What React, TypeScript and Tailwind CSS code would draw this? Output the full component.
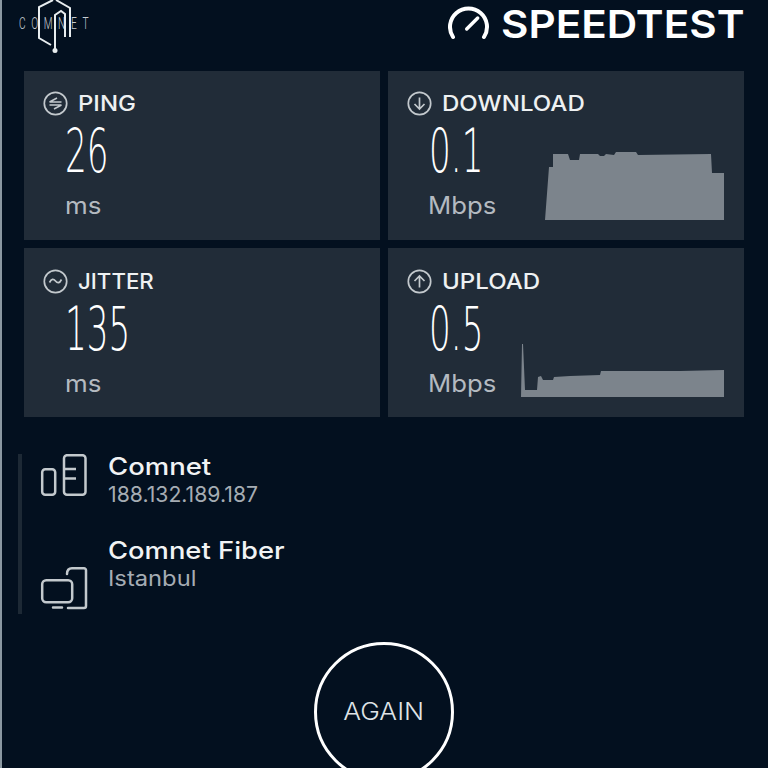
const sans = "font-['Inter','Open_Sans',sans-serif]";

function RoundIcon({ kind }: { kind: 'ping' | 'jitter' | 'down' | 'up' }) {
  return (
    <svg width="25" height="25" viewBox="0 0 25 25" fill="none" stroke="#c3c9cd" strokeWidth="1.7" className="shrink-0">
      <circle cx="12.5" cy="12.5" r="11.2" />
      {kind === 'ping' && <path d="M6.500 11h12M14 7l-7.500 4M6.500 14h12M11 18l7.500-4" strokeWidth="1.500" />}
      {kind === 'jitter' && <path d="M6.500 13.500c2-4 4-4 6-1.500s4 2.500 6-1.500" />}
      {kind === 'down' && <path d="M12.500 6.500v11M7.500 13l5 5 5-5" />}
      {kind === 'up' && <path d="M12.500 18.500v-11M7.500 12l5-5 5 5" />}
    </svg>
  );
}

interface StatProps {
  icon: 'ping' | 'jitter' | 'down' | 'up';
  label: string;
  labelClass: string;
  value: string;
  unit: string;
  unitClass: string;
  topClass: string;
  chart?: string;
}

function Stat({ icon, label, labelClass, value, unit, unitClass, topClass, chart }: StatProps) {
  return (
    <div className={`${topClass} relative h-[169px] bg-[#212c38] pl-[19px]`}>
      <div className="flex h-[25px] items-center gap-[10px]">
        <RoundIcon kind={icon} />
        <span className={`${sans} ${labelClass} origin-left text-[21px] font-medium leading-none text-[#eef1f2]`}>{label}</span>
      </div>
      <div className="ml-[22px] mt-[4px] h-[63px] origin-left scale-x-[0.57] font-['DejaVu_Sans',sans-serif] text-[60px] font-extralight leading-[63px] whitespace-nowrap text-white">
        {value}
      </div>
      <div className={`${sans} ${unitClass} ml-[22px] mt-[8px] origin-left text-[24px] leading-[30px] text-[#b4bac0]`}>{unit}</div>
      {chart && (
        <svg className="absolute left-0 top-0" width="356" height="169" viewBox="0 0 356 169">
          <polygon points={chart} fill="#7c848c" />
        </svg>
      )}
    </div>
  );
}

export default function App() {
  return (
    <div className="h-[768px] w-[768px] overflow-hidden border-l-2 border-[#8b98a1] bg-[#03101f]">
      <div className="-ml-[2px] flex h-[71px] items-start justify-between pl-[19px] pr-[24px]">
        <div className="relative h-[55px] w-[72px]">
          <span className="absolute left-0 top-[13px] origin-left scale-x-[0.6] whitespace-nowrap font-['Roboto',sans-serif] text-[17px] font-light leading-[20px] tracking-[9.3px] text-[#c8ced2]">COMNET</span>
          <svg className="absolute left-0 top-0" width="72" height="55" viewBox="19 0 72 55" fill="none" stroke="#e8edef" strokeWidth="2">
            <path d="M53 0L39 7V38L51 45" />
            <path d="M55 50V15L61 11L65 14V37" />
            <path d="M56 0L70 8V37" />
            <circle cx="55" cy="50.500" r="2.500" fill="#e8edef" stroke="none" />
          </svg>
        </div>
        <div className="flex items-start gap-[11px] pt-[4px]">
          <svg width="42" height="36" viewBox="0 0 42 36" fill="none" stroke="#fff" strokeWidth="4" strokeLinecap="round">
            <path d="M5 33a18.500 18.500 0 1 1 31 0" />
            <path d="M18.700 25L29.700 14" strokeWidth="3.400" />
          </svg>
          <div className="w-[243px]">
            <span className={`${sans} block origin-left scale-x-[1.11] text-[38px] font-semibold leading-[40px] text-white`}>SPEEDTEST</span>
          </div>
        </div>
      </div>

      <div className="-ml-[2px] grid w-[768px] grid-cols-2 gap-[8px] px-[24px]">
        <Stat topClass="pt-[20px]" icon="ping" label="PING" labelClass="scale-x-[1.14]" value="26" unit="ms" unitClass="scale-x-[1.08]" />
        <Stat
          topClass="pt-[20px]"
          icon="down"
          label="DOWNLOAD"
          labelClass="scale-x-[1.145]"
          value="0.1"
          unit="Mbps"
          unitClass="-translate-x-px scale-x-[1.07]"
          chart="157,149 161,96 165,96 165,83 180,83 182,89 191,89 192,83 210,83 212,85 216,85 218,83 226,84 228,81 248,81 250,84 323,83 324,102 336,102 336,149"
        />
        <Stat topClass="pt-[21px]" icon="jitter" label="JITTER" labelClass="scale-x-[1.06]" value="135" unit="ms" unitClass="scale-x-[1.08]" />
        <Stat
          topClass="pt-[21px]"
          icon="up"
          label="UPLOAD"
          labelClass="scale-x-[1.145]"
          value="0.5"
          unit="Mbps"
          unitClass="-translate-x-px scale-x-[1.07]"
          chart="133,149 134,96 135,96 137,142 149,142 150,129 153,128 155,132 165,132 166,129 182,128 212,127 213,123 292,123 336,122 336,149"
        />
      </div>

      <div className="ml-[16px] mt-[37px] flex h-[160px] border-l-4 border-[#1d2935] pl-[17px]">
        <div className="flex flex-col">
          <div className="flex h-[84px] gap-[19px]">
            <svg width="50" height="44" viewBox="0 0 50 44" fill="none" stroke="#c3c9cd" strokeWidth="2.500" strokeLinejoin="round">
              <rect x="3.200" y="15.200" width="13" height="25.500" rx="3" />
              <rect x="25" y="1.200" width="21.500" height="39.500" rx="3" />
              <path d="M25 15H37M25 24.500H37" />
            </svg>
            <div>
              <div className={`${sans} origin-left scale-x-[1.145] text-[24px] font-medium leading-[26px] text-[#f1f3f4]`}>Comnet</div>
              <div className={`${sans} origin-left scale-x-[1.01] text-[21px] leading-[30px] text-[#a5acb3]`}>188.132.189.187</div>
            </div>
          </div>
          <div className="flex gap-[19px]">
            <svg className="mt-[27px]" width="50" height="46" viewBox="0 0 50 46" fill="none" stroke="#c3c9cd" strokeWidth="2.500" strokeLinejoin="round" strokeLinecap="round">
              <rect x="3.200" y="15.200" width="30" height="22" rx="4" />
              <path d="M14 42.500H23M28 9Q28 3.200 33 3.200H45a2 2 0 0 1 2 2V41a2 2 0 0 1-2 2H29" />
            </svg>
            <div>
              <div className={`${sans} origin-left scale-x-[1.14] text-[24px] font-medium leading-[26px] text-[#f1f3f4]`}>Comnet Fiber</div>
              <div className={`${sans} origin-left scale-x-[1.13] text-[21px] leading-[30px] text-[#a5acb3]`}>Istanbul</div>
            </div>
          </div>
        </div>
      </div>

      <div className="-ml-[2px] mt-[28px] flex justify-center">
        <div className="flex h-[140px] w-[140px] items-center justify-center rounded-full border-[3px] border-white">
          <span className={`${sans} scale-x-[1.1] text-[24px] font-light text-[#dfe3e6]`}>AGAIN</span>
        </div>
      </div>
    </div>
  );
}
